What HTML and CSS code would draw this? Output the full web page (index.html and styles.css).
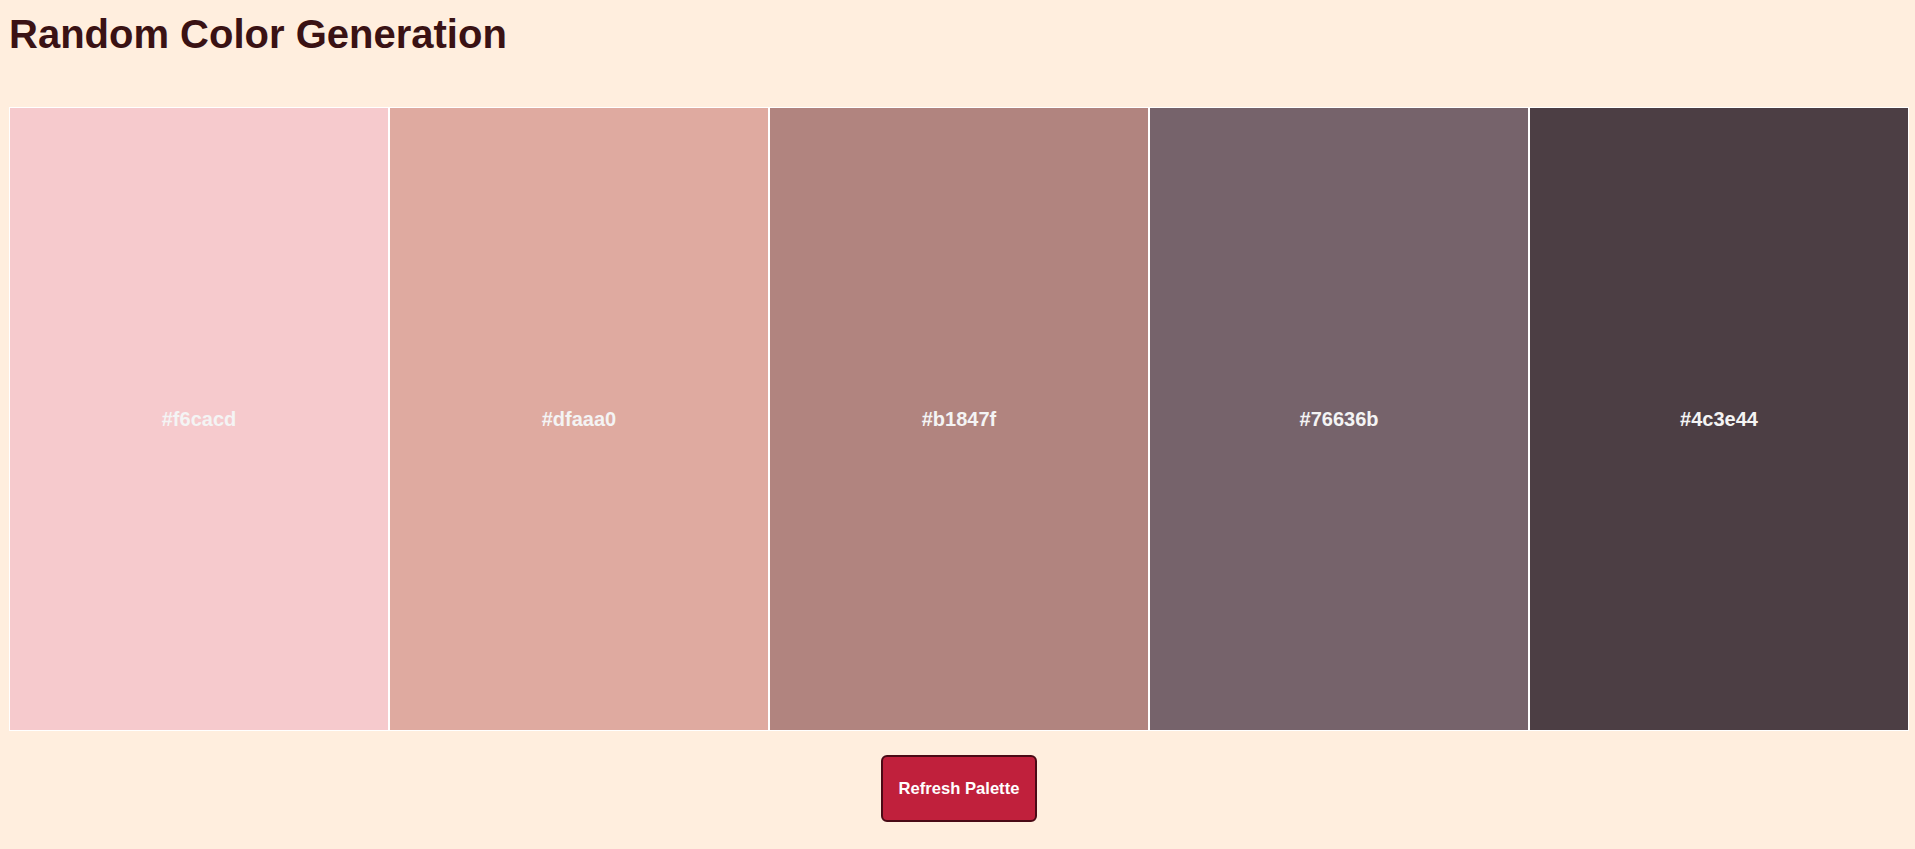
FILE: index.html
```html
<!DOCTYPE html>
<html lang="en">
<head>
<meta charset="utf-8">
<title>Random Color Generation</title>
<link rel="stylesheet" href="styles.css">
</head>
<body>
<h1 class="title">Random Color Generation</h1>
<div class="palette">
  <div class="swatch" style="background:#f6cacd"><span class="hex">#f6cacd</span></div>
  <div class="swatch" style="background:#dfaaa0"><span class="hex">#dfaaa0</span></div>
  <div class="swatch" style="background:#b1847f"><span class="hex">#b1847f</span></div>
  <div class="swatch" style="background:#76636b"><span class="hex">#76636b</span></div>
  <div class="swatch" style="background:#4c3e44"><span class="hex">#4c3e44</span></div>
</div>
<div class="actions">
  <button class="refresh" type="button">Refresh Palette</button>
</div>
</body>
</html>
```
FILE: styles.css
```css
html, body {
  margin: 0;
  padding: 0;
  background: #ffeede;
  font-family: "Liberation Sans", Arial, sans-serif;
}

body {
  padding: 0 6px 0 9px;
  height: 849px;
  box-sizing: border-box;
  overflow: hidden;
}

.title {
  margin: 11px 0 0 0;
  height: 96px;
  font-size: 40px;
  line-height: 46px;
  font-weight: 700;
  color: #3a1214;
}

.palette {
  display: flex;
  height: 624px;
}

.swatch {
  flex: 1 1 0;
  border: 1px solid #ffffff;
  display: flex;
  align-items: center;
  justify-content: center;
}

.hex {
  font-size: 20px;
  font-weight: 700;
  color: #f4f4f4;
}

.actions {
  display: flex;
  justify-content: center;
  padding-top: 24px;
}

.refresh {
  background: #c0203c;
  color: #ffffff;
  font-family: "Liberation Sans", Arial, sans-serif;
  font-size: 16.6px;
  font-weight: 700;
  white-space: nowrap;
  border: 2px solid #4a0a16;
  border-radius: 6px;
  padding: 0 15.5px;
  height: 67px;
  cursor: pointer;
}
```
